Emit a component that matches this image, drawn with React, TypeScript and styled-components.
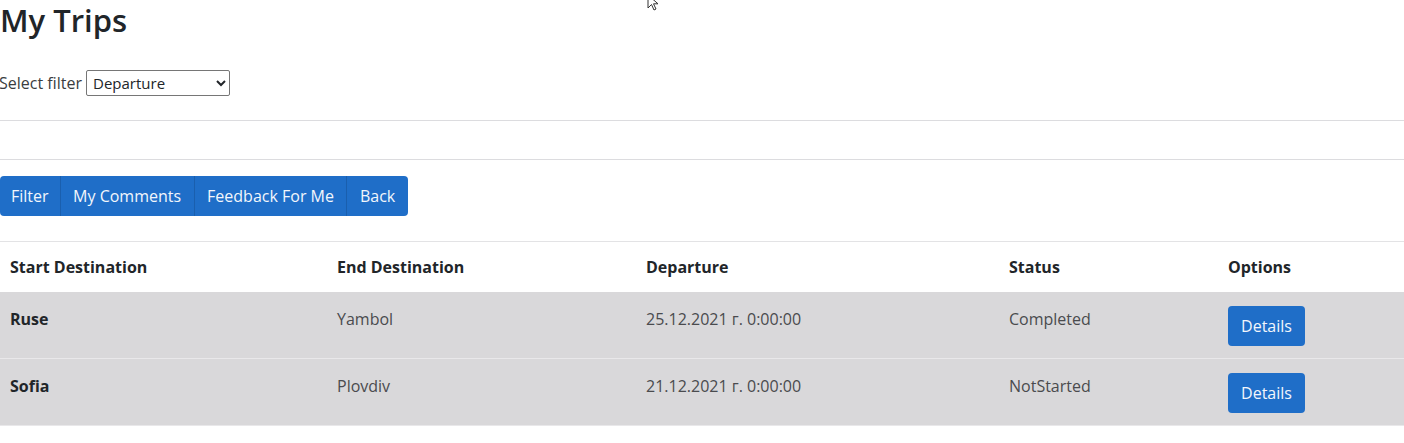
import React from "react";
import styled, {createGlobalStyle} from "styled-components";

const GlobalStyle = createGlobalStyle`
  html, body {
    margin: 0;
    padding: 0;
    background: #ffffff;
  }
  body {
    font-family: "Open Sans", "Noto Sans", sans-serif;
    font-size: 16px;
    color: #212529;
    overflow: hidden;
  }
`

const Page = styled.div`
  position: relative;
  width: 1404px;
  height: 443px;
  overflow: hidden;
`

const Title = styled.h1`
  margin: 0;
  padding: 2px 0 0 0;
  font-size: 31px;
  font-weight: 600;
  line-height: 36px;
  color: #212529;
`

const FilterRow = styled.div`
  display: flex;
  align-items: center;
  gap: 4px;
  margin: 32px 0 0 -1px;
  height: 26px;
  color: #3a3d40;
`

const Select = styled.select`
  width: 144px;
  height: 26px;
  font-family: inherit;
  font-size: 15px;
  color: #212529;
  border: 1px solid #767676;
  border-radius: 2px;
  background: #fff;
  padding: 0 2px;
`

const Rule = styled.hr<{ $top: number }>`
  margin: ${p => p.$top}px 0 0 0;
  border: 0;
  border-top: 1px solid #dcdcdf;
`

const ButtonGroup = styled.div`
  display: inline-flex;
  margin-top: 16px;
  border-radius: 4px;
  overflow: hidden;
`

const GroupButton = styled.button`
  font-family: inherit;
  font-size: 16px;
  color: #f2f6fc;
  background: #1f6ec8;
  border: 0;
  border-left: 1px solid #1a5fae;
  height: 40px;
  padding: 0 12.5px;
  cursor: pointer;

  &:first-child {
    border-left: 0;
    padding: 0 11px;
  }
`

const Table = styled.table`
  width: 1404px;
  margin-top: 25px;
  border-collapse: collapse;
  border-top: 1px solid #e3e3e5;
`

const Th = styled.th`
  text-align: left;
  font-weight: 700;
  padding: 13px 10px 13px 10px;
  line-height: 24px;
  color: #212529;
`

const Tr = styled.tr`
  background: #d9d8da;
  border-bottom: 1px solid #e9e8ea;
`

const Td = styled.td<{ $bold?: boolean }>`
  vertical-align: top;
  padding: 15px 10px 12px 10px;
  line-height: 24px;
  font-weight: ${p => (p.$bold ? 700 : 400)};
  color: ${p => (p.$bold ? "#212529" : "#4a4b4e")};
`

const DetailsButton = styled.button`
  font-family: inherit;
  font-size: 16px;
  color: #f2f6fc;
  background: #1f6ec8;
  border: 0;
  border-radius: 4px;
  height: 40px;
  width: 77px;
  margin-top: -1px;
  cursor: pointer;
`

const Cursor = styled.svg`
  position: absolute;
  left: 647px;
  top: -6px;
`

const trips = [
    {id: "1", start: "Ruse", end: "Yambol", departure: "25.12.2021 г. 0:00:00", status: "Completed"},
    {id: "2", start: "Sofia", end: "Plovdiv", departure: "21.12.2021 г. 0:00:00", status: "NotStarted"},
];

const widths = [327, 309, 363, 219, 186];

export default function App() {
    return (
        <Page>
            <GlobalStyle/>
            <Title>My Trips</Title>
            <FilterRow>
                <span>Select filter</span>
                <Select defaultValue="Departure">
                    <option>Departure</option>
                    <option>Status</option>
                </Select>
            </FilterRow>
            <Rule $top={24}/>
            <Rule $top={38}/>
            <ButtonGroup>
                <GroupButton>Filter</GroupButton>
                <GroupButton>My Comments</GroupButton>
                <GroupButton>Feedback For Me</GroupButton>
                <GroupButton>Back</GroupButton>
            </ButtonGroup>
            <Table>
                <colgroup>
                    {widths.map((w, i) => <col key={i} style={{width: w}}/>)}
                </colgroup>
                <thead>
                <tr>
                    <Th>Start Destination</Th>
                    <Th>End Destination</Th>
                    <Th>Departure</Th>
                    <Th>Status</Th>
                    <Th>Options</Th>
                </tr>
                </thead>
                <tbody>
                {trips.map(trip => (
                    <Tr key={trip.id}>
                        <Td $bold>{trip.start}</Td>
                        <Td>{trip.end}</Td>
                        <Td>{trip.departure}</Td>
                        <Td>{trip.status}</Td>
                        <Td><DetailsButton>Details</DetailsButton></Td>
                    </Tr>
                ))}
                </tbody>
            </Table>
            <Cursor width="14" height="18" viewBox="0 0 14 18">
                <path d="M1 1 L1 14 L4.5 10.5 L7 16 L9 15 L6.5 9.8 L11 9.8 Z" fill="#fff" stroke="#333" strokeWidth="1"/>
            </Cursor>
        </Page>
    );
}
